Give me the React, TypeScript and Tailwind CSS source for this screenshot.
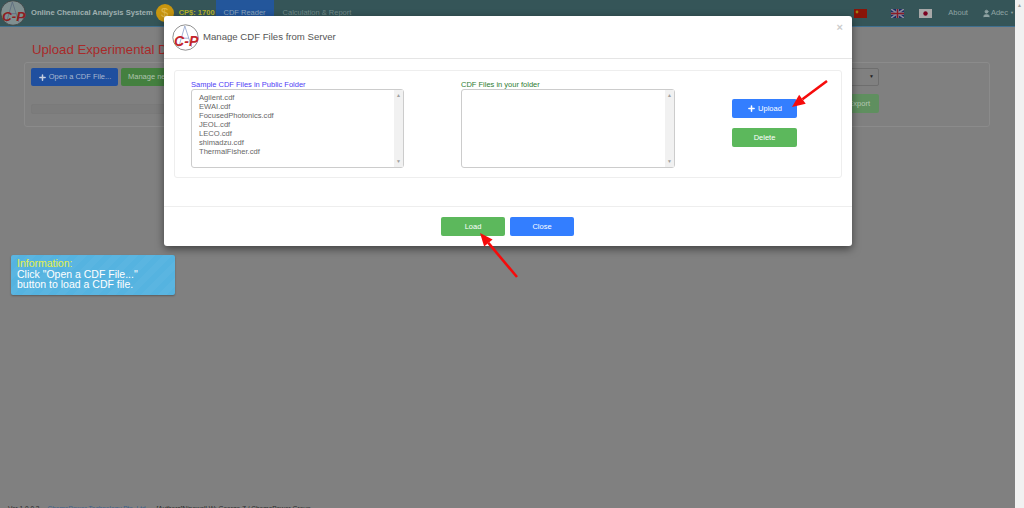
import React from 'react';
import { Plus, User } from 'lucide-react';

const Logo = ({ size, dim = false }: { size: number; dim?: boolean }) => (
  <svg width={size} height={size} viewBox="0 0 40 40" className="shrink-0">
    <circle cx="20" cy="20" r="18.8" fill={dim ? '#7f8f90' : '#fff'} stroke={dim ? '#3a3a3a' : '#6b6b6b'} strokeWidth="1.1" />
    <path d="M19 3 L10 34 M19 3 L29 34 M13 21 H25" stroke={dim ? '#5a6a80' : '#8fa3cc'} strokeWidth="1.2" fill="none" />
    <text x="3" y="32" fontFamily="Liberation Sans, sans-serif" fontSize="21" fontWeight="700" fontStyle="italic" fill={dim ? '#8f1c20' : '#c4252b'} textLength="36" lengthAdjust="spacingAndGlyphs">C-P</text>
  </svg>
);

const FlagCN = () => (
  <svg width="13" height="9" viewBox="0 0 13 9">
    <rect width="13" height="9" fill="#8a1408" />
    <circle cx="3" cy="3" r="1.4" fill="#a08010" />
  </svg>
);

const FlagUK = () => (
  <svg width="13" height="9" viewBox="0 0 13 9">
    <rect width="13" height="9" fill="#1a2c66" />
    <path d="M0 0 L13 9 M13 0 L0 9" stroke="#8a8a9a" strokeWidth="1.6" />
    <path d="M6.5 0 V9 M0 4.5 H13" stroke="#8a8a9a" strokeWidth="2.6" />
    <path d="M6.5 0 V9 M0 4.5 H13" stroke="#8a1a25" strokeWidth="1.4" />
  </svg>
);

const FlagJP = () => (
  <svg width="13" height="9" viewBox="0 0 13 9">
    <rect width="13" height="9" fill="#a8a8a8" />
    <circle cx="6.5" cy="4.5" r="2.2" fill="#7a0020" />
  </svg>
);

const Arrow = ({ x1, y1, x2, y2 }: { x1: number; y1: number; x2: number; y2: number }) => {
  const a = Math.atan2(y2 - y1, x2 - x1);
  const bx = x2 - Math.cos(a) * 13;
  const by = y2 - Math.sin(a) * 13;
  const nx = -Math.sin(a) * 5.5;
  const ny = Math.cos(a) * 5.5;
  return (
    <>
      <line x1={x1} y1={y1} x2={bx} y2={by} stroke="#f60b0b" strokeWidth="2.6" />
      <polygon points={`${x2},${y2} ${bx + nx},${by + ny} ${bx - nx},${by - ny}`} fill="#f60b0b" />
    </>
  );
};

const files = ['Agilent.cdf', 'EWAI.cdf', 'FocusedPhotonics.cdf', 'JEOL.cdf', 'LECO.cdf', 'shimadzu.cdf', 'ThermalFisher.cdf'];

const ListBox = ({ items }: { items: string[] }) => (
  <div className="flex h-[79px] w-full justify-between rounded-[3px] border border-[#ccc] bg-white">
    <div className="pl-[7px] pt-[3px] text-[7.6px] leading-[9px] text-[#666]">
      {items.map((f) => (
        <div key={f}>{f}</div>
      ))}
    </div>
    <div className="flex w-[9px] flex-col items-center justify-between bg-[#f1f1f1] py-[3px] text-[5px] leading-[5px] text-[#a0a0a0]">
      <span>▲</span>
      <span>▼</span>
    </div>
  </div>
);

export default function App() {
  return (
    <div className="relative h-[508px] w-[1024px] overflow-hidden bg-[#808080] font-['Liberation_Sans',Arial,sans-serif]">
      <div className="flex h-full w-[1015px] flex-col">
        {/* navbar */}
        <div className="flex h-[27px] shrink-0 items-center border-b border-[#3f6f90] bg-[#355558] text-[7.5px]">
          <Logo size={26} dim />
          <span className="ml-[5px] text-[7.6px] font-bold text-[#a0b0b0]">Online Chemical Analysis System</span>
          <span className="ml-[3px] flex h-[18px] w-[18px] items-center justify-center rounded-full bg-[#c8960f] text-[13px] text-[#e0b84a]">$</span>
          <span className="ml-[5px] font-bold text-[#b5b52a]">CP$: 1700</span>
          <span className="ml-[1px] flex h-[27px] w-[58px] items-center justify-center bg-[#23569b] text-[#8fa6bb]">CDF Reader</span>
          <span className="ml-[9px] text-[#718a8a]">Calculation &amp; Report</span>
          <div className="ml-auto flex items-center">
            <FlagCN />
            <span className="ml-[24px]"><FlagUK /></span>
            <span className="ml-[15px]"><FlagJP /></span>
            <span className="ml-[16px] text-[#8fa3a3]">About</span>
            <span className="ml-[14px] flex items-center text-[#8fa3a3]">
              <User size={9} fill="currentColor" />
              Adec
            </span>
            <span className="ml-[2px] mr-[1px] text-[4px] text-[#8fa3a3]">▼</span>
          </div>
        </div>

        {/* page behind the dialog */}
        <div className="flex grow flex-col pl-[24px]">
          <h1 className="ml-[8px] mt-[13px] text-[13.2px] leading-[20px] text-[#a82a2a]">Upload Experimental Data</h1>
          <div className="mt-[2px] flex h-[65px] w-[966px] rounded-[3px] border border-[#8b8b8b] px-[6px] pt-[5px]">
            <div className="w-[800px]">
              <div className="flex gap-[3px]">
                <button className="flex h-[18px] w-[87px] items-center justify-center gap-[2px] rounded-[2px] bg-[#1f4f9f] text-[7.5px] text-[#a8b8d0]">
                  <Plus size={9} strokeWidth={4} className="text-[#c8d0e0]" />
                  Open a CDF File...
                </button>
                <button className="h-[18px] w-[80px] rounded-[2px] bg-[#44803f] pl-[7px] text-left text-[7.5px] text-[#b0c4b0]">Manage new</button>
              </div>
              <div className="mt-[18px] h-[10px] rounded-[2px] border border-[#7a7a7a] bg-[#7c7c7c]" />
            </div>
            <div className="ml-auto mr-[104px] flex flex-col items-end gap-[8px]">
              <div className="flex h-[18px] w-[40px] items-center justify-between rounded-[2px] border border-[#6e6e6e] px-[4px] text-[7.5px] text-[#444]">
                <span>0</span>
                <span className="text-[5px] text-[#222]">▼</span>
              </div>
              <button className="h-[19px] w-[36px] rounded-[2px] bg-[#5f8f5f] pr-[9px] text-right text-[7.5px] text-[#b4c8b4]">Export</button>
            </div>
          </div>
        </div>
        <div className="h-[3px] shrink-0 overflow-hidden whitespace-nowrap pl-[8px] text-[6.5px] leading-[8px] text-[#2a2a2a]">
          <span>Ver 1.0.0.3</span>
          <span className="ml-[8px] text-[#3a5f88]">ChemoPower Technology Pte. Ltd.</span>
          <span className="ml-[9px]">[Authors]Ninewell W: George Z / ChemoPower Group</span>
        </div>
      </div>

      {/* scrollbar */}
      <div className="absolute inset-y-0 right-0 flex w-[9px] justify-center bg-[#f1f1f1] pt-[3px] text-[5px] leading-[5px] text-[#a0a0a0]">▲</div>

      {/* dialog */}
      <div className="absolute left-[164px] top-[16px] flex h-[230px] w-[688px] flex-col rounded-[3px] bg-white shadow-[0_3px_9px_rgba(0,0,0,0.5)]">
        <div className="relative flex h-[43px] shrink-0 items-center gap-[4px] border-b border-[#e5e5e5] pl-[8px]">
          <Logo size={27} />
          <span className="text-[9.6px] text-[#555]">Manage CDF Files from Server</span>
          <span className="absolute right-[9px] top-[6px] text-[11px] font-bold leading-[11px] text-[#ccc]">×</span>
        </div>
        <div className="px-[10px] pt-[11px]">
          <div className="flex h-[108px] rounded-[3px] border border-[#eee] pl-[16px] pt-[9px]">
            <div className="w-[213px]">
              <div className="text-[7.5px] leading-[9px] text-[#5040f5]">Sample CDF Files in Public Folder</div>
              <ListBox items={files} />
            </div>
            <div className="ml-[57px] w-[214px]">
              <div className="text-[7.5px] leading-[9px] text-[#2e7d32]">CDF Files in your folder</div>
              <ListBox items={[]} />
            </div>
            <div className="ml-[57px] flex flex-col gap-[10px] pt-[19px]">
              <button className="flex h-[19px] w-[65px] items-center justify-center gap-[2px] rounded-[2px] bg-[#337eff] text-[7.5px] text-white">
                <Plus size={9} strokeWidth={4} />
                Upload
              </button>
              <button className="h-[19px] w-[65px] rounded-[2px] bg-[#5cb85c] text-[7.5px] text-white">Delete</button>
            </div>
          </div>
        </div>
        <div className="mt-[28px] flex grow justify-center gap-[5px] border-t border-[#eee] pr-[1px] pt-[10px]">
          <button className="h-[19px] w-[64px] rounded-[2px] bg-[#5cb85c] text-[7.5px] text-white">Load</button>
          <button className="h-[19px] w-[64px] rounded-[2px] bg-[#337eff] text-[7.5px] text-white">Close</button>
        </div>
      </div>

      {/* information toast */}
      <div className="absolute left-[11px] top-[255px] h-[40px] w-[164px] rounded-[2px] bg-[#55b3e0] bg-[repeating-linear-gradient(135deg,rgba(255,255,255,0.03)_0,rgba(255,255,255,0.03)_6px,transparent_6px,transparent_12px)] pl-[6px] pt-[3px] text-[10.5px] leading-[10.5px] text-white shadow-[0_1px_2px_rgba(0,0,0,0.3)]">
        <div className="text-[#e6f04a]">Information:</div>
        <div>Click "Open a CDF File..."</div>
        <div>button to load a CDF file.</div>
      </div>

      {/* annotation arrows */}
      <svg className="absolute inset-0" width="1024" height="508">
        <Arrow x1={827} y1={81} x2={792} y2={107} />
        <Arrow x1={517} y1={277} x2={480} y2={233} />
      </svg>
    </div>
  );
}
